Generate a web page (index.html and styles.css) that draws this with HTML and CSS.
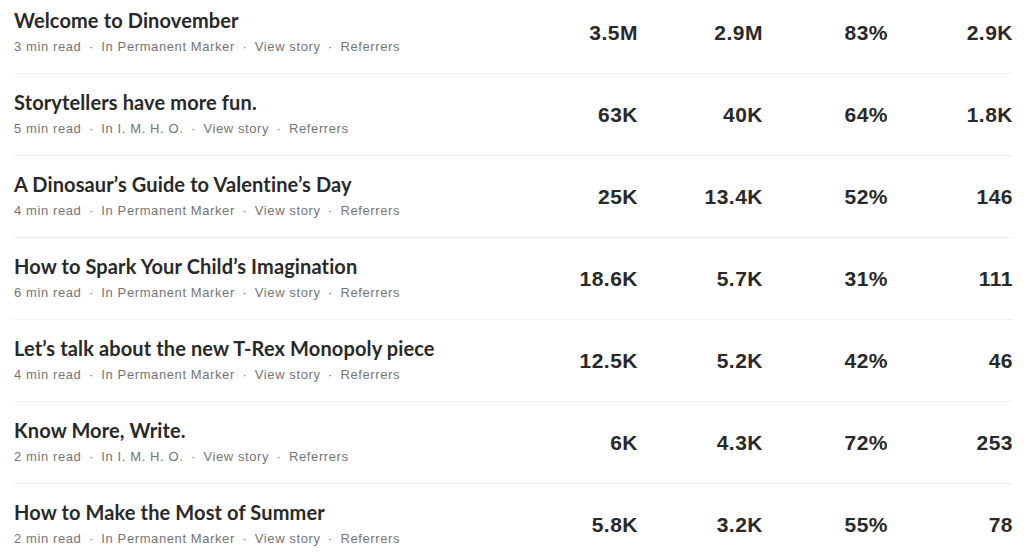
FILE: index.html
```html
<!DOCTYPE html>
<html>
<head>
<meta charset="utf-8">
<link rel="stylesheet" href="styles.css">
</head>
<body>
<div class="table">
  <div class="row">
    <div class="story">
      <div class="title">Welcome to Dinovember</div>
      <div class="meta"><span>3 min read</span><span class="dot">·</span><span>In Permanent Marker</span><span class="dot">·</span><span>View story</span><span class="dot">·</span><span>Referrers</span></div>
    </div>
    <div class="num">3.5M</div><div class="num">2.9M</div><div class="num">83%</div><div class="num">2.9K</div>
  </div>
  <div class="row">
    <div class="story">
      <div class="title">Storytellers have more fun.</div>
      <div class="meta"><span>5 min read</span><span class="dot">·</span><span>In I. M. H. O.</span><span class="dot">·</span><span>View story</span><span class="dot">·</span><span>Referrers</span></div>
    </div>
    <div class="num">63K</div><div class="num">40K</div><div class="num">64%</div><div class="num">1.8K</div>
  </div>
  <div class="row">
    <div class="story">
      <div class="title">A Dinosaur’s Guide to Valentine’s Day</div>
      <div class="meta"><span>4 min read</span><span class="dot">·</span><span>In Permanent Marker</span><span class="dot">·</span><span>View story</span><span class="dot">·</span><span>Referrers</span></div>
    </div>
    <div class="num">25K</div><div class="num">13.4K</div><div class="num">52%</div><div class="num">146</div>
  </div>
  <div class="row">
    <div class="story">
      <div class="title">How to Spark Your Child’s Imagination</div>
      <div class="meta"><span>6 min read</span><span class="dot">·</span><span>In Permanent Marker</span><span class="dot">·</span><span>View story</span><span class="dot">·</span><span>Referrers</span></div>
    </div>
    <div class="num">18.6K</div><div class="num">5.7K</div><div class="num">31%</div><div class="num">111</div>
  </div>
  <div class="row">
    <div class="story">
      <div class="title">Let’s talk about the new T-Rex Monopoly piece</div>
      <div class="meta"><span>4 min read</span><span class="dot">·</span><span>In Permanent Marker</span><span class="dot">·</span><span>View story</span><span class="dot">·</span><span>Referrers</span></div>
    </div>
    <div class="num">12.5K</div><div class="num">5.2K</div><div class="num">42%</div><div class="num">46</div>
  </div>
  <div class="row">
    <div class="story">
      <div class="title">Know More, Write.</div>
      <div class="meta"><span>2 min read</span><span class="dot">·</span><span>In I. M. H. O.</span><span class="dot">·</span><span>View story</span><span class="dot">·</span><span>Referrers</span></div>
    </div>
    <div class="num">6K</div><div class="num">4.3K</div><div class="num">72%</div><div class="num">253</div>
  </div>
  <div class="row">
    <div class="story">
      <div class="title">How to Make the Most of Summer</div>
      <div class="meta"><span>2 min read</span><span class="dot">·</span><span>In Permanent Marker</span><span class="dot">·</span><span>View story</span><span class="dot">·</span><span>Referrers</span></div>
    </div>
    <div class="num">5.8K</div><div class="num">3.2K</div><div class="num">55%</div><div class="num">78</div>
  </div>
</div>
</body>
</html>
```
FILE: styles.css
```css
html, body {
  margin: 0;
  padding: 0;
  background: #fff;
}
.table {
  margin: -8px 18px 0 14px;
}
.row {
  display: flex;
  align-items: center;
  height: 81px;
  border-bottom: 1px solid #efefef;
}
.story {
  flex: 1;
  display: flex;
  flex-direction: column;
  justify-content: center;
  padding-bottom: 2px;
}
.title {
  font-family: Lato, "Liberation Sans", sans-serif;
  font-weight: 700;
  font-size: 20px;
  letter-spacing: 0.12px;
  line-height: 26px;
  color: #292929;
}
.meta {
  font-family: "Liberation Sans", Arial, sans-serif;
  font-size: 13px;
  letter-spacing: 0.6px;
  line-height: 18px;
  color: #757575;
  margin-top: 5px;
}
.dot {
  margin: 0 7.5px;
}
.num {
  width: 125px;
  text-align: right;
  font-family: "Liberation Sans", Arial, sans-serif;
  font-weight: 700;
  font-size: 21px;
  letter-spacing: 0.5px;
  color: #292929;
}
```
